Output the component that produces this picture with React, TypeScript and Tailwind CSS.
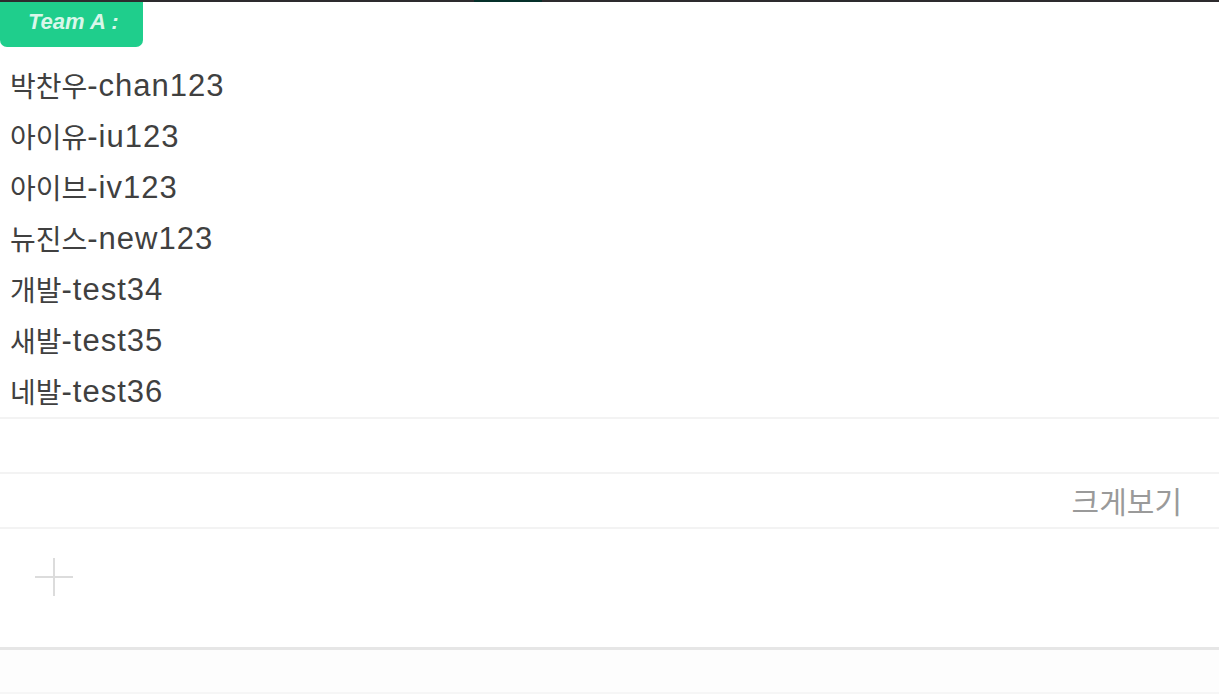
const members = [
  ["박찬우", "chan123"],
  ["아이유", "iu123"],
  ["아이브", "iv123"],
  ["뉴진스", "new123"],
  ["개발", "test34"],
  ["새발", "test35"],
  ["네발", "test36"],
];

const App = () => {
  return (
    <div className="w-[1219px] h-[697px] overflow-hidden bg-white font-['Noto_Sans_CJK_KR','Noto_Sans',sans-serif]">
      {/* top window strip */}
      <div className="flex h-[2px] bg-[#2d2b2e]">
        <div className="w-[474px]" />
        <div className="w-[68px] bg-[#05302a]" />
      </div>

      <div className="w-[143px] h-[45px] rounded-b-[7px] bg-[#1fce8c] pl-[28px] pt-[3px]">
        <span className="text-[22px] font-bold italic text-[#d9f7ea] font-['Liberation_Sans',sans-serif]">
          Team A :
        </span>
      </div>

      <ul className="mt-[13px]">
        {members.map(([kr, id]) => (
          <li
            key={id}
            className="h-[51px] flex items-center pb-[1px] pl-[10px] leading-none text-[#404040]"
          >
            <span className="text-[28px]">{kr}</span>
            <span className="text-[31px] tracking-[1px] font-['Liberation_Sans','Noto_Sans_CJK_KR',sans-serif]">
              -{id}
            </span>
          </li>
        ))}
      </ul>

      <div className="h-[2px] bg-[#f3f3f3]" />
      <div className="h-[53px]" />
      <div className="h-[2px] bg-[#f3f3f3]" />
      <div className="h-[53px] flex items-center justify-end pr-[37px] text-[30px] text-[#9a9a9a]">
        크게보기
      </div>
      <div className="h-[2px] bg-[#f3f3f3]" />
      <div className="h-[118px] pl-[35px] pt-[29px]">
        <svg width="38" height="38" viewBox="0 0 38 38" fill="none" stroke="#dcdcdc" strokeWidth="2">
          <line x1="19" y1="0" x2="19" y2="38" />
          <line x1="0" y1="19" x2="38" y2="19" />
        </svg>
      </div>
      <div className="h-[3px] bg-[#e6e6e6]" />
      <div className="h-[42px] bg-[#fdfdfd]" />
      <div className="h-[2px] bg-[#f6f6f6]" />
    </div>
  );
};

export default App;
